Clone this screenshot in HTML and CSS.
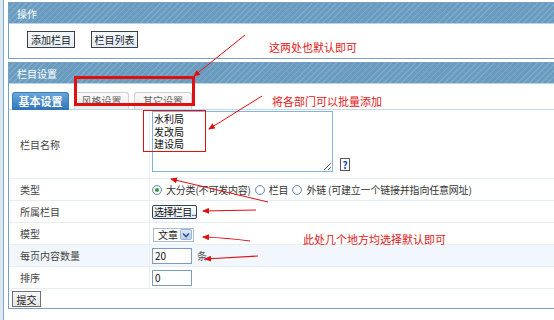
FILE: index.html
```html
<!DOCTYPE html>
<html lang="zh-CN">
<head>
<meta charset="utf-8">
<title>栏目设置</title>
<link rel="stylesheet" href="styles.css">
</head>
<body>
<div class="frame">
  <div class="edge"></div>
  <div class="main">
    <div class="panel">
      <div class="ph">操作</div>
      <div class="ops">
        <button class="btn-op">添加栏目</button>
        <button class="btn-op w47">栏目列表</button>
      </div>
    </div>
    <div class="panel p2">
      <div class="ph">栏目设置</div>
      <div class="tabs">
        <span class="tab active">基本设置</span>
        <span class="tab">风格设置</span>
        <span class="tab wide">其它设置</span>
      </div>
      <div class="form">
        <div class="row r-name">
          <div class="lab">栏目名称</div>
          <div class="val top">
            <textarea class="ta">水利局
发改局
建设局</textarea>
            <span class="help">?</span>
          </div>
        </div>
        <div class="row">
          <div class="lab">类型</div>
          <div class="val">
            <span class="radio on"></span><span class="rt">大分类(不可发内容)</span>
            <span class="radio"></span><span class="rt">栏目</span>
            <span class="radio"></span><span class="rt">外链 (可建立一个链接并指向任意网址)</span>
          </div>
        </div>
        <div class="row">
          <div class="lab">所属栏目</div>
          <div class="val"><button class="btn-sel">选择栏目..</button></div>
        </div>
        <div class="row">
          <div class="lab">模型</div>
          <div class="val">
            <span class="sel"><span class="sel-t">文章</span><span class="sel-a"><svg width="8" height="6" viewBox="0 0 8 6"><path d="M1 1.5 L4 4.5 L7 1.5" fill="none" stroke="#34568a" stroke-width="1.6"/></svg></span></span>
          </div>
        </div>
        <div class="row alt">
          <div class="lab">每页内容数量</div>
          <div class="val"><span class="inp">20</span><span class="unit">条</span></div>
        </div>
        <div class="row">
          <div class="lab">排序</div>
          <div class="val"><span class="inp">0</span></div>
        </div>
      </div>
      <div class="submit"><button class="btn-sub">提交</button></div>
    </div>
  </div>
</div>
<svg class="notes" width="554" height="320" viewBox="0 0 554 320">
  <defs>
    <marker id="ah" markerWidth="7" markerHeight="6" refX="6" refY="3" orient="auto" markerUnits="userSpaceOnUse">
      <path d="M0,0 L7,3 L0,6 z" fill="#e01010"/>
    </marker>
  </defs>
  <rect x="75.5" y="77.5" width="118" height="27" fill="none" stroke="#e01010" stroke-width="3"/>
  <line x1="245" y1="35" x2="194" y2="76" stroke="#e01010" stroke-width="1" marker-end="url(#ah)"/>
  <text x="269" y="52" class="nt">这两处也默认即可</text>
  <rect x="143.5" y="110.5" width="62" height="41" fill="none" stroke="#e01010" stroke-width="1"/>
  <line x1="262" y1="96" x2="209" y2="129" stroke="#e01010" stroke-width="1" marker-end="url(#ah)"/>
  <text x="272" y="106" class="nt">将各部门可以批量添加</text>
  <line x1="268" y1="202" x2="171" y2="179" stroke="#e01010" stroke-width="1" marker-end="url(#ah)"/>
  <line x1="256" y1="210" x2="203" y2="211" stroke="#e01010" stroke-width="1.2" marker-end="url(#ah)"/>
  <path d="M250 241 Q228 238 203 237" fill="none" stroke="#e01010" stroke-width="1.2" marker-end="url(#ah)"/>
  <line x1="258" y1="256" x2="205" y2="259" stroke="#e01010" stroke-width="1.2" marker-end="url(#ah)"/>
  <text x="303" y="244" class="nt">此处几个地方均选择默认即可</text>
</svg>
</body>
</html>
```
FILE: styles.css
```css
* { box-sizing: border-box; }
body {
  margin: 0;
  width: 554px;
  height: 320px;
  overflow: hidden;
  background: #fff;
  position: relative;
  font-family: "Noto Sans CJK SC", "Noto Sans", sans-serif;
  font-size: 10px;
  color: #333;
}
.frame { display: flex; height: 320px; }
.edge {
  flex: none;
  width: 4px;
  background: #dce7f2;
  border-right: 1px solid #86a6c6;
}
.main { flex: none; width: 570px; padding: 2px 0 0 4px; }
.panel { border: 1px solid #7d9fbf; background: #fff; }
.p2 { margin-top: 3px; }
.ph {
  height: 21px;
  line-height: 21px;
  padding-left: 8px;
  color: #fff;
  font-size: 10px;
  background: repeating-linear-gradient(135deg, #6a9cc0 0 3.2px, #7eabcb 3.2px 4.3px);
  border-bottom: 1px solid #bcd2e4;
}
.ops {
  height: 34px;
  display: flex;
  gap: 16px;
  padding: 7px 0 0 18px;
  align-items: flex-start;
}
.btn-op {
  width: 48px;
  height: 17px;
  padding: 0;
  border: 1px solid #3f3f3f;
  background: linear-gradient(#f4f8fc, #e2ecf6);
  font: 10px "Noto Sans CJK SC", sans-serif;
  color: #222;
}
.btn-op.w47 { width: 47px; }
.tabs {
  height: 26px;
  display: flex;
  gap: 5px;
  padding: 8px 0 0 3px;
  border-bottom: 1px solid #c3d7e8;
}
.tab {
  width: 55px;
  height: 17px;
  line-height: 16px;
  text-align: center;
  color: #666;
  border: 1px solid #cfcfcf;
  border-bottom: none;
  border-radius: 3px 3px 0 0;
  background: linear-gradient(#fafafa, #ececec);
}
.tab.wide { width: 58px; }
.tab.active {
  width: 57px;
  height: 18px;
  color: #fff;
  font-weight: bold;
  font-size: 11px;
  border-color: #3a7cbc;
  background: linear-gradient(#6aa7dc, #2f73b6);
}
.row {
  display: flex;
  height: 22px;
  border-bottom: 1px solid #e7edf3;
}
.row.r-name { height: 69px; }
.row.alt { background: #f1f7fc; }
.lab {
  flex: none;
  width: 141px;
  padding-left: 11px;
  display: flex;
  align-items: center;
  border-right: 1px solid #e7edf3;
  color: #444;
}
.val {
  flex: 1;
  display: flex;
  align-items: center;
  padding-left: 2px;
}
.val.top { align-items: flex-start; }
.ta {
  width: 181px;
  height: 61px;
  margin: 1px 0 0 0;
  padding: 1px 1px;
  border: 1px solid #80b3de;
  font: 10px/12.5px "Noto Sans CJK SC", sans-serif;
  color: #111;
  resize: both;
  background: #fff;
}
.help {
  align-self: flex-end;
  margin: 0 0 7px 7px;
  width: 10px;
  height: 13px;
  border: 1px solid #555;
  background: #fff;
  color: #1b3fb5;
  font-weight: bold;
  font-size: 10px;
  line-height: 11px;
  text-align: center;
}
.radio {
  flex: none;
  width: 10px;
  height: 10px;
  border: 1px solid #6d8fb2;
  border-radius: 50%;
  background: radial-gradient(circle, #fff 30%, #dbe5ef 100%);
  margin-right: 4px;
  position: relative;
}
.radio.on::after {
  content: "";
  position: absolute;
  left: 2px;
  top: 2px;
  width: 4px;
  height: 4px;
  border-radius: 50%;
  background: #3b9b3b;
}
.rt { margin-right: 4px; color: #333; white-space: nowrap; letter-spacing: -0.2px; }
.btn-sel {
  width: 45px;
  height: 14px;
  padding: 0 0 0 1px;
  border: 1px solid #2a4462;
  border-radius: 2px;
  background: linear-gradient(#ffffff, #e3ebf3);
  font: 10px/12px "Noto Sans CJK SC", sans-serif;
  letter-spacing: -0.6px;
  text-align: left;
  color: #111;
  white-space: nowrap;
  margin-top: 1px;
}
.sel {
  margin-left: 1px;
  margin-top: 2px;
  width: 41px;
  height: 14px;
  border: 1px solid #a9bfd6;
  background: #fff;
  display: flex;
  align-items: center;
}
.sel-t { padding-left: 4px; color: #222; }
.sel-a {
  margin-left: auto;
  margin-right: 1px;
  width: 12px;
  height: 11px;
  border: 1px solid #9cb6d6;
  border-radius: 2px;
  background: linear-gradient(#dce8f7, #bcd0ec);
  display: flex;
  align-items: center;
  justify-content: center;
}
.inp {
  width: 40px;
  height: 16px;
  border: 1px solid #7f9db9;
  background: #fff;
  padding-left: 2px;
  line-height: 14px;
  color: #111;
}
.unit { margin-left: 5px; color: #555; }
.submit { height: 19px; padding: 2px 0 0 3px; }
.btn-sub {
  width: 29px;
  height: 16px;
  padding: 0;
  border: 1px solid #707070;
  background: linear-gradient(#f7f7f7, #e6e6e6);
  font: 10px/13px "Noto Sans CJK SC", sans-serif;
  color: #222;
}
.notes {
  position: absolute;
  left: 0;
  top: 0;
  pointer-events: none;
}
.nt {
  fill: #e01818;
  font-family: "Noto Sans CJK SC", sans-serif;
  font-size: 11px;
}
```
